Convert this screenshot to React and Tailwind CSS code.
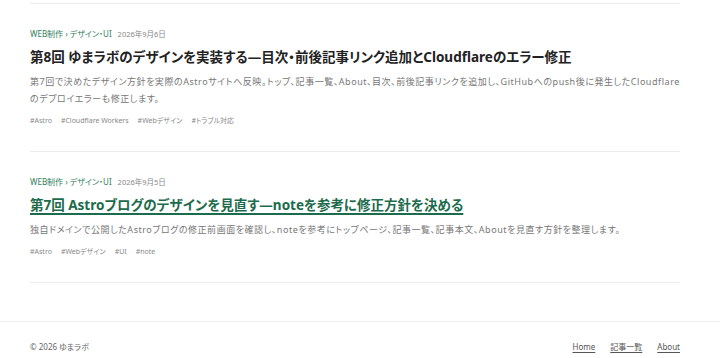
import React from "react";

const posts = [
  {
    category: "WEB制作 › デザイン・UI",
    date: "2026年9月6日",
    title: "第8回 ゆまラボのデザインを実装する—目次・前後記事リンク追加とCloudflareのエラー修正",
    excerpt:
      "第7回で決めたデザイン方針を実際のAstroサイトへ反映。トップ、記事一覧、About、目次、前後記事リンクを追加し、GitHubへのpush後に発生したCloudflareのデプロイエラーも修正します。",
    tags: ["Astro", "Cloudflare Workers", "Webデザイン", "トラブル対応"],
    hover: false,
  },
  {
    category: "WEB制作 › デザイン・UI",
    date: "2026年9月5日",
    title: "第7回 Astroブログのデザインを見直す—noteを参考に修正方針を決める",
    excerpt:
      "独自ドメインで公開したAstroブログの修正前画面を確認し、noteを参考にトップページ、記事一覧、記事本文、Aboutを見直す方針を整理します。",
    tags: ["Astro", "Webデザイン", "UI", "note"],
    hover: true,
  },
];

const PostItem = ({ post }) => (
  <article className="border-t border-[#ececec] pt-[23px] pb-[24px]">
    {/* メタ情報 */}
    <div className="flex items-center gap-[6px] text-[8px] leading-[14px]">
      <span className="text-[#2e7d5b]">{post.category}</span>
      <span className="text-[#888] text-[7.5px]">{post.date}</span>
    </div>

    {/* タイトル */}
    <h2
      className={`mt-[4px] text-[13.5px] leading-[24px] font-bold ${
        post.hover
          ? "text-[#1c6b4c] underline decoration-[1.5px] underline-offset-[3px]"
          : "text-[#222]"
      }`}
    >
      {post.title}
    </h2>

    {/* 概要 */}
    <p className="mt-1 text-[9px] leading-[17px] tracking-[0.06em] text-[#777]">
      {post.excerpt}
    </p>

    {/* タグ */}
    <ul className="mt-2 flex gap-[9px] text-[7px] leading-[12px] text-[#888]">
      {post.tags.map((tag) => (
        <li key={tag}>#{tag}</li>
      ))}
    </ul>
  </article>
);

export default function App() {
  return (
    <div className="min-h-screen bg-white font-['Noto_Sans','Noto_Sans_CJK_JP',sans-serif] [font-feature-settings:'palt'] pt-[3px]">
      <main className="ml-[30px] w-[650px]">
        {posts.map((post) => (
          <PostItem key={post.title} post={post} />
        ))}
        <div className="border-t border-[#ececec]" />
      </main>

      <footer className="mt-[38px] border-t border-[#eeeeee] pt-[18px]">
        <div className="ml-[30px] w-[650px] flex items-center justify-between text-[8px] leading-[14px]">
          <p className="text-[#666]">© 2026 ゆまラボ</p>
          <nav className="flex gap-[15px] text-[#555]">
            <a href="#" className="underline underline-offset-2">Home</a>
            <a href="#" className="underline underline-offset-2">記事一覧</a>
            <a href="#" className="underline underline-offset-2">About</a>
          </nav>
        </div>
      </footer>
    </div>
  );
}
